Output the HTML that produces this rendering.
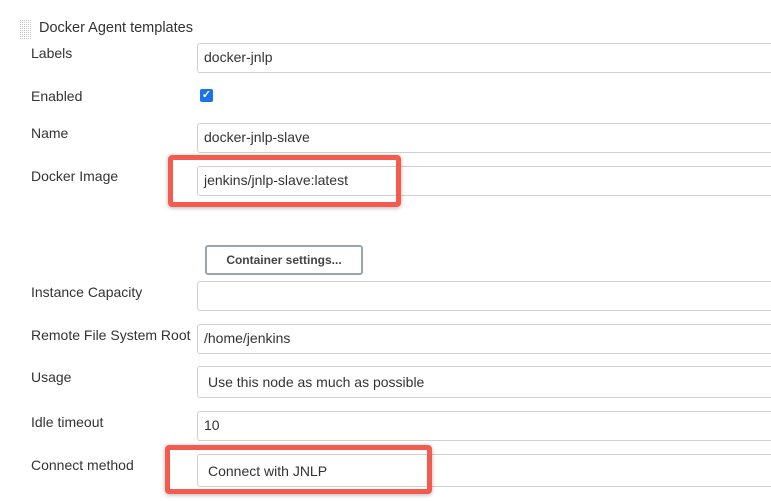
<!DOCTYPE html>
<html><head><style>
body{margin:0;width:771px;height:501px;background:#fff;font-family:"Liberation Sans",sans-serif;color:#333;position:relative;overflow:hidden}
.a{position:absolute}
.lbl{position:absolute;left:31px;font-size:14px;color:#333}
.in{position:absolute;left:197px;width:600px;height:28px;border:1px solid #d0d0d0;border-radius:3px;box-sizing:border-box;font-size:14px;padding-left:6px;line-height:27px;color:#333;background:#fff}
.red{position:absolute;border:5px solid #f45a4e;border-radius:4px;box-sizing:border-box;box-shadow:0 1px 4px rgba(0,0,0,.3)}
</style></head><body>
<svg class="a" style="left:20px;top:20px" width="12" height="19"><defs><pattern id="p" width="2" height="2" patternUnits="userSpaceOnUse"><rect width="1" height="1" fill="#c4c4c4"/></pattern></defs><rect width="12" height="19" fill="url(#p)"/></svg>
<div class="a" style="left:39px;top:20px;font-size:14.5px">Docker Agent templates</div>
<div class="lbl" style="top:45px">Labels</div>
<div class="in" style="top:43px;height:30px">docker-jnlp</div>
<div class="lbl" style="top:88px">Enabled</div>
<div class="a" style="left:200px;top:89px;width:13px;height:13px;background:#1a73e8;border-radius:2px;color:#fff;font-size:11px;line-height:13px;text-align:center;font-weight:bold">✓</div>
<div class="lbl" style="top:125px">Name</div>
<div class="in" style="top:123px;height:30px">docker-jnlp-slave</div>
<div class="lbl" style="top:168px">Docker Image</div>
<div class="in" style="top:166px;height:30px">jenkins/jnlp-slave:latest</div>
<div class="red" style="left:168px;top:155px;width:233px;height:52px"></div>
<div class="a" style="left:205px;top:245px;width:158px;height:30px;border:2px solid #9aa5ad;border-radius:3px;box-sizing:border-box;font-size:12px;font-weight:bold;text-align:center;line-height:26px;color:#444">Container settings...</div>
<div class="lbl" style="top:284px">Instance Capacity</div>
<div class="in" style="top:281px;height:30px"></div>
<div class="lbl" style="top:327px">Remote File System Root</div>
<div class="in" style="top:324px;height:30px">/home/jenkins</div>
<div class="lbl" style="top:369px">Usage</div>
<div class="in" style="top:366px;height:32px;padding-left:10px;line-height:31px">Use this node as much as possible</div>
<div class="lbl" style="top:414px">Idle timeout</div>
<div class="in" style="top:411px;height:30px">10</div>
<div class="lbl" style="top:457px">Connect method</div>
<div class="in" style="top:454px;height:33px;padding-left:10px;line-height:32px">Connect with JNLP</div>
<div class="red" style="left:165px;top:445px;width:267px;height:49px"></div>
</body></html>
